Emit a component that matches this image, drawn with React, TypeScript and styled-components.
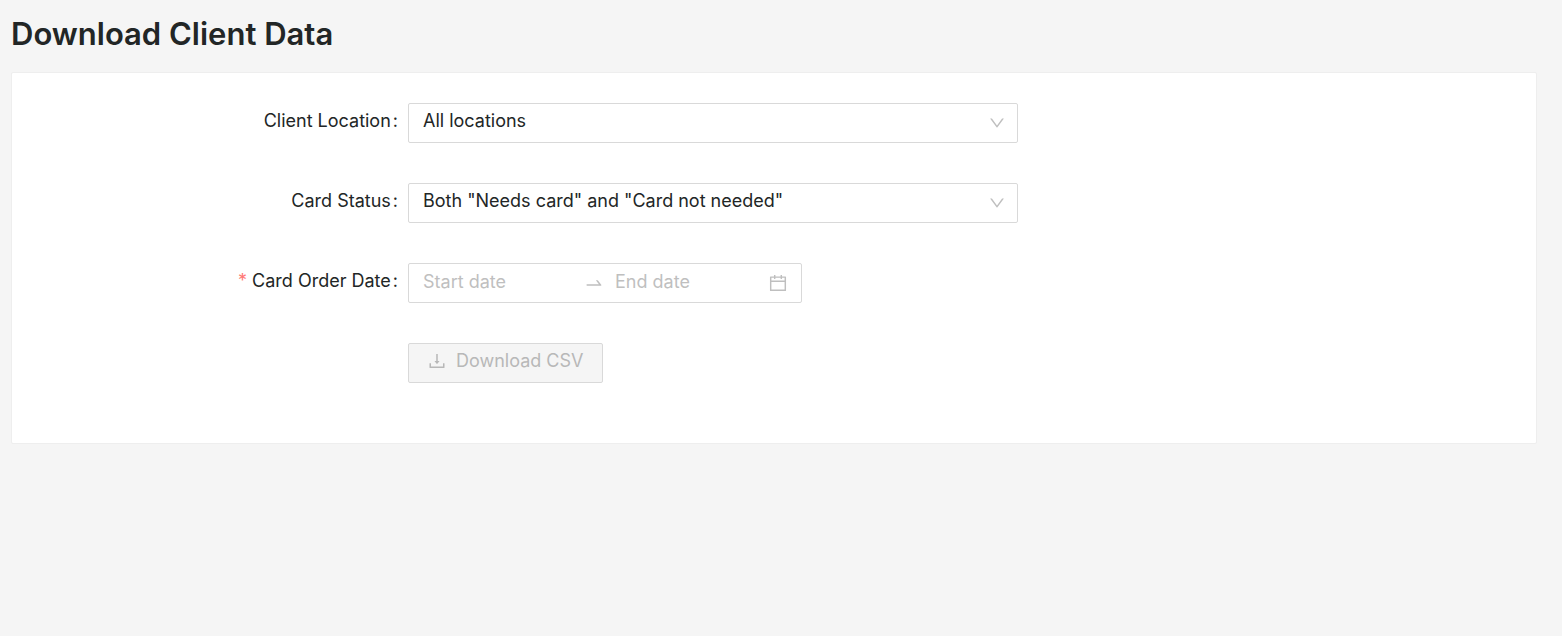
import React from "react";
import styled, { createGlobalStyle } from "styled-components";

const GlobalStyle = createGlobalStyle`
  *, *::before, *::after { box-sizing: border-box; }
  body {
    margin: 0;
    background: #f5f5f5;
    color: #222626;
    font-family: Inter, "Liberation Sans", sans-serif;
    font-size: 18px;
    line-height: 24px;
  }
`;

const Page = styled.main`
  padding: 14px 25px 24px 11px;
`;

const Title = styled.h1`
  margin: 0 0 18px;
  font-size: 31px;
  line-height: 40px;
  font-weight: 600;
`;

const Card = styled.form`
  display: flex;
  flex-direction: column;
  gap: 40px;
  padding: 30px 30px 60px;
  background: #fff;
  border: 1px solid #eee;
  border-radius: 2px;
`;

const Row = styled.div`
  display: grid;
  grid-template-columns: 6fr 10fr 8fr;
`;

const Label = styled.label`
  padding: 6px 10px 10px 0;
  text-align: right;
  white-space: nowrap;

  &::after {
    content: ":";
    margin-left: 2px;
  }
`;

const Required = styled.span`
  margin-right: 5px;
  color: #ff7875;
`;

const Control = styled.div`
  grid-column: 2;
  display: flex;
`;

const SelectBox = styled.div`
  position: relative;
  flex: 1;
  color: #bfbfbf;

  svg {
    position: absolute;
    top: 12px;
    right: 13px;
    pointer-events: none;
  }
`;

const Select = styled.select`
  display: block;
  width: 100%;
  height: 40px;
  padding: 0 36px 4px 14px;
  appearance: none;
  background: #fff;
  border: 1px solid #d9d9d9;
  border-radius: 2px;
  color: #222626;
  font: inherit;
`;

const Range = styled.div`
  display: flex;
  align-items: center;
  width: 394px;
  height: 40px;
  padding: 0 14px;
  border: 1px solid #d9d9d9;
  border-radius: 2px;
  color: #bfbfbf;
`;

const DateInput = styled.input`
  flex: 1;
  min-width: 0;
  height: 38px;
  padding: 0 0 4px;
  border: 0;
  background: transparent;
  color: #222626;
  font: inherit;

  &::placeholder {
    color: #bfbfbf;
    opacity: 1;
  }
`;

const Separator = styled.span`
  display: flex;
  padding: 0 12px;
`;

const CalendarSlot = styled.span`
  display: flex;
  padding-left: 4px;
`;

const DownloadButton = styled.button`
  display: flex;
  align-items: center;
  gap: 10px;
  height: 40px;
  padding: 0 19px 4px;
  background: #f5f5f5;
  border: 1px solid #d9d9d9;
  border-radius: 2px;
  color: #b8b8b8;
  font: inherit;
`;

const Icon = ({ path, size = 18 }: { path: string; size?: number }) => (
  <svg width={size} height={size} viewBox="64 64 896 896" fill="currentColor" aria-hidden="true">
    <path d={path} />
  </svg>
);

const icons = {
  down: "M884 256h-75c-5.100 0-9.900 2.500-12.900 6.600L512 654.200 227.900 262.600c-3-4.100-7.800-6.600-12.900-6.600h-75c-6.500 0-10.300 7.400-6.500 12.700l352.600 486.100c12.800 17.600 39 17.600 51.700 0l352.600-486.100c3.900-5.300.1-12.700-6.400-12.700z",
  swap: "M873.100 596.200l-164-208A32 32 0 00684 376h-64.800c-6.700 0-10.400 7.700-6.300 13l144.300 183H152c-4.400 0-8 3.600-8 8v60c0 4.400 3.600 8 8 8h695.900c26.800 0 41.700-30.800 25.200-51.800z",
  calendar: "M880 184H712v-64c0-4.400-3.600-8-8-8h-56c-4.400 0-8 3.600-8 8v64H384v-64c0-4.400-3.600-8-8-8h-56c-4.400 0-8 3.600-8 8v64H144c-17.700 0-32 14.300-32 32v664c0 17.700 14.300 32 32 32h736c17.700 0 32-14.300 32-32V216c0-17.700-14.300-32-32-32zm-40 656H184V460h656v380zM184 392V256h128v48c0 4.400 3.600 8 8 8h56c4.400 0 8-3.600 8-8v-48h256v48c0 4.400 3.600 8 8 8h56c4.400 0 8-3.600 8-8v-48h128v136H184z",
  download: "M505.700 661a8 8 0 0012.600 0l112-141.700c4.100-5.200.4-12.900-6.300-12.900h-74.100V168c0-4.400-3.600-8-8-8h-60c-4.400 0-8 3.600-8 8v338.300H400c-6.700 0-10.400 7.700-6.300 12.900l112 141.800zM878 626h-60c-4.400 0-8 3.600-8 8v154H214V634c0-4.400-3.600-8-8-8h-60c-4.400 0-8 3.600-8 8v198c0 17.700 14.300 32 32 32h684c17.700 0 32-14.300 32-32V634c0-4.400-3.600-8-8-8z",
};

function SelectRow({ id, label, value }: { id: string; label: string; value: string }) {
  return (
    <Row>
      <Label htmlFor={id}>{label}</Label>
      <Control>
        <SelectBox>
          <Select id={id} defaultValue={value}>
            <option>{value}</option>
          </Select>
          <Icon path={icons.down} size={16} />
        </SelectBox>
      </Control>
    </Row>
  );
}

export default function App() {
  return (
    <>
      <GlobalStyle />
      <Page>
        <Title>Download Client Data</Title>
        <Card>
          <SelectRow id="location" label="Client Location" value="All locations" />
          <SelectRow id="status" label="Card Status" value={'Both "Needs card" and "Card not needed"'} />
          <Row>
            <Label htmlFor="start">
              <Required>*</Required>Card Order Date
            </Label>
            <Control>
              <Range>
                <DateInput id="start" placeholder="Start date" />
                <Separator>
                  <Icon path={icons.swap} />
                </Separator>
                <DateInput aria-label="End date" placeholder="End date" />
                <CalendarSlot>
                  <Icon path={icons.calendar} />
                </CalendarSlot>
              </Range>
            </Control>
          </Row>
          <Row>
            <Control>
              <DownloadButton type="button" disabled>
                <Icon path={icons.download} />
                Download CSV
              </DownloadButton>
            </Control>
          </Row>
        </Card>
      </Page>
    </>
  );
}
